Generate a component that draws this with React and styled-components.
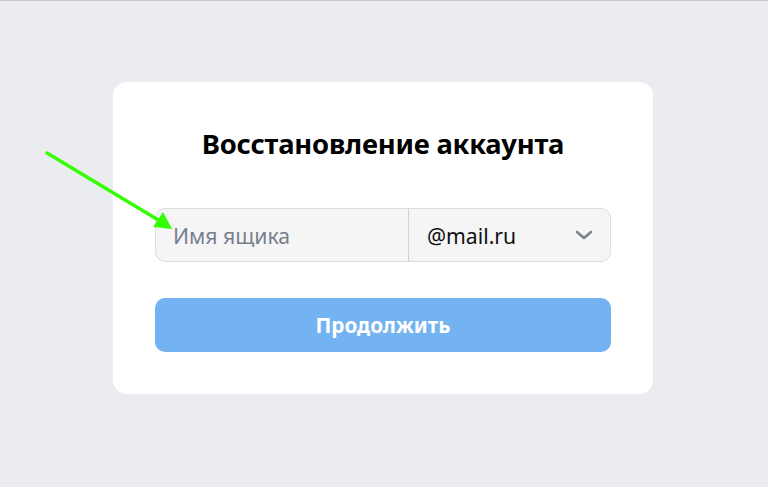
import React from "react";
import styled, { createGlobalStyle } from "styled-components";

const Global = createGlobalStyle`
  html, body { margin: 0; padding: 0; }
  body {
    background: #ebecf0;
    font-family: "Noto Sans", "Open Sans", sans-serif;
    border-top: 1px solid #c9cace;
    min-height: 486px;
  }
`;

const Page = styled.div`
  position: relative;
  width: 768px;
  height: 486px;
  display: flex;
  justify-content: center;
  align-items: flex-start;
  padding-top: 81px;
  box-sizing: border-box;
`;

const Card = styled.div`
  width: 540px;
  margin-left: -2px;
  box-sizing: border-box;
  background: #ffffff;
  border-radius: 14px;
  padding: 42px 42px 42px;
  display: flex;
  flex-direction: column;
`;

const Title = styled.h1`
  margin: 0;
  height: 40px;
  line-height: 39px;
  text-align: center;
  font-size: 27.4px;
  font-weight: 700;
  color: #000;
  letter-spacing: -0.2px;
`;

const Field = styled.div`
  margin-top: 44px;
  height: 54px;
  box-sizing: border-box;
  display: flex;
  background: #f5f5f6;
  border: 1px solid #dcdcdf;
  border-radius: 10px;
`;

const Input = styled.input`
  width: 253px;
  box-sizing: border-box;
  border: none;
  border-right: 1px solid #d2d2d5;
  background: transparent;
  padding: 0 0 0 17px;
  font-family: inherit;
  font-size: 21.2px;
  color: #000;
  outline: none;
  &::placeholder { color: #77808d; }
`;

const Select = styled.div`
  flex: 1;
  display: flex;
  align-items: center;
  justify-content: space-between;
  padding: 0 17px 0 18px;
  font-size: 21.2px;
  color: #111;
`;

const Button = styled.button`
  margin-top: 36px;
  height: 54px;
  border: none;
  border-radius: 10px;
  background: #73b3f2;
  color: #fff;
  font-family: inherit;
  font-size: 20.7px;
  font-weight: 700;
`;

const Arrow = styled.svg`
  position: absolute;
  left: 0;
  top: 0;
  pointer-events: none;
`;

export default function App() {
  return (
    <>
      <Global />
      <Page>
        <Card>
          <Title>Восстановление аккаунта</Title>
          <Field>
            <Input placeholder="Имя ящика" />
            <Select>
              <span>@mail.ru</span>
              <svg width="18" height="10" viewBox="0 0 18 10">
                <path d="M2 2 L9 8 L16 2" fill="none" stroke="#7d8590" strokeWidth="2.6" strokeLinecap="round" strokeLinejoin="round" />
              </svg>
            </Select>
          </Field>
          <Button>Продолжить</Button>
        </Card>
        <Arrow width="768" height="486" viewBox="0 0 768 486">
          <line x1="47" y1="152" x2="160" y2="220" stroke="#33ff00" strokeWidth="3.4" strokeLinecap="round" />
          <polygon points="172,228 153,226 163,211" fill="#33ff00" />
        </Arrow>
      </Page>
    </>
  );
}
